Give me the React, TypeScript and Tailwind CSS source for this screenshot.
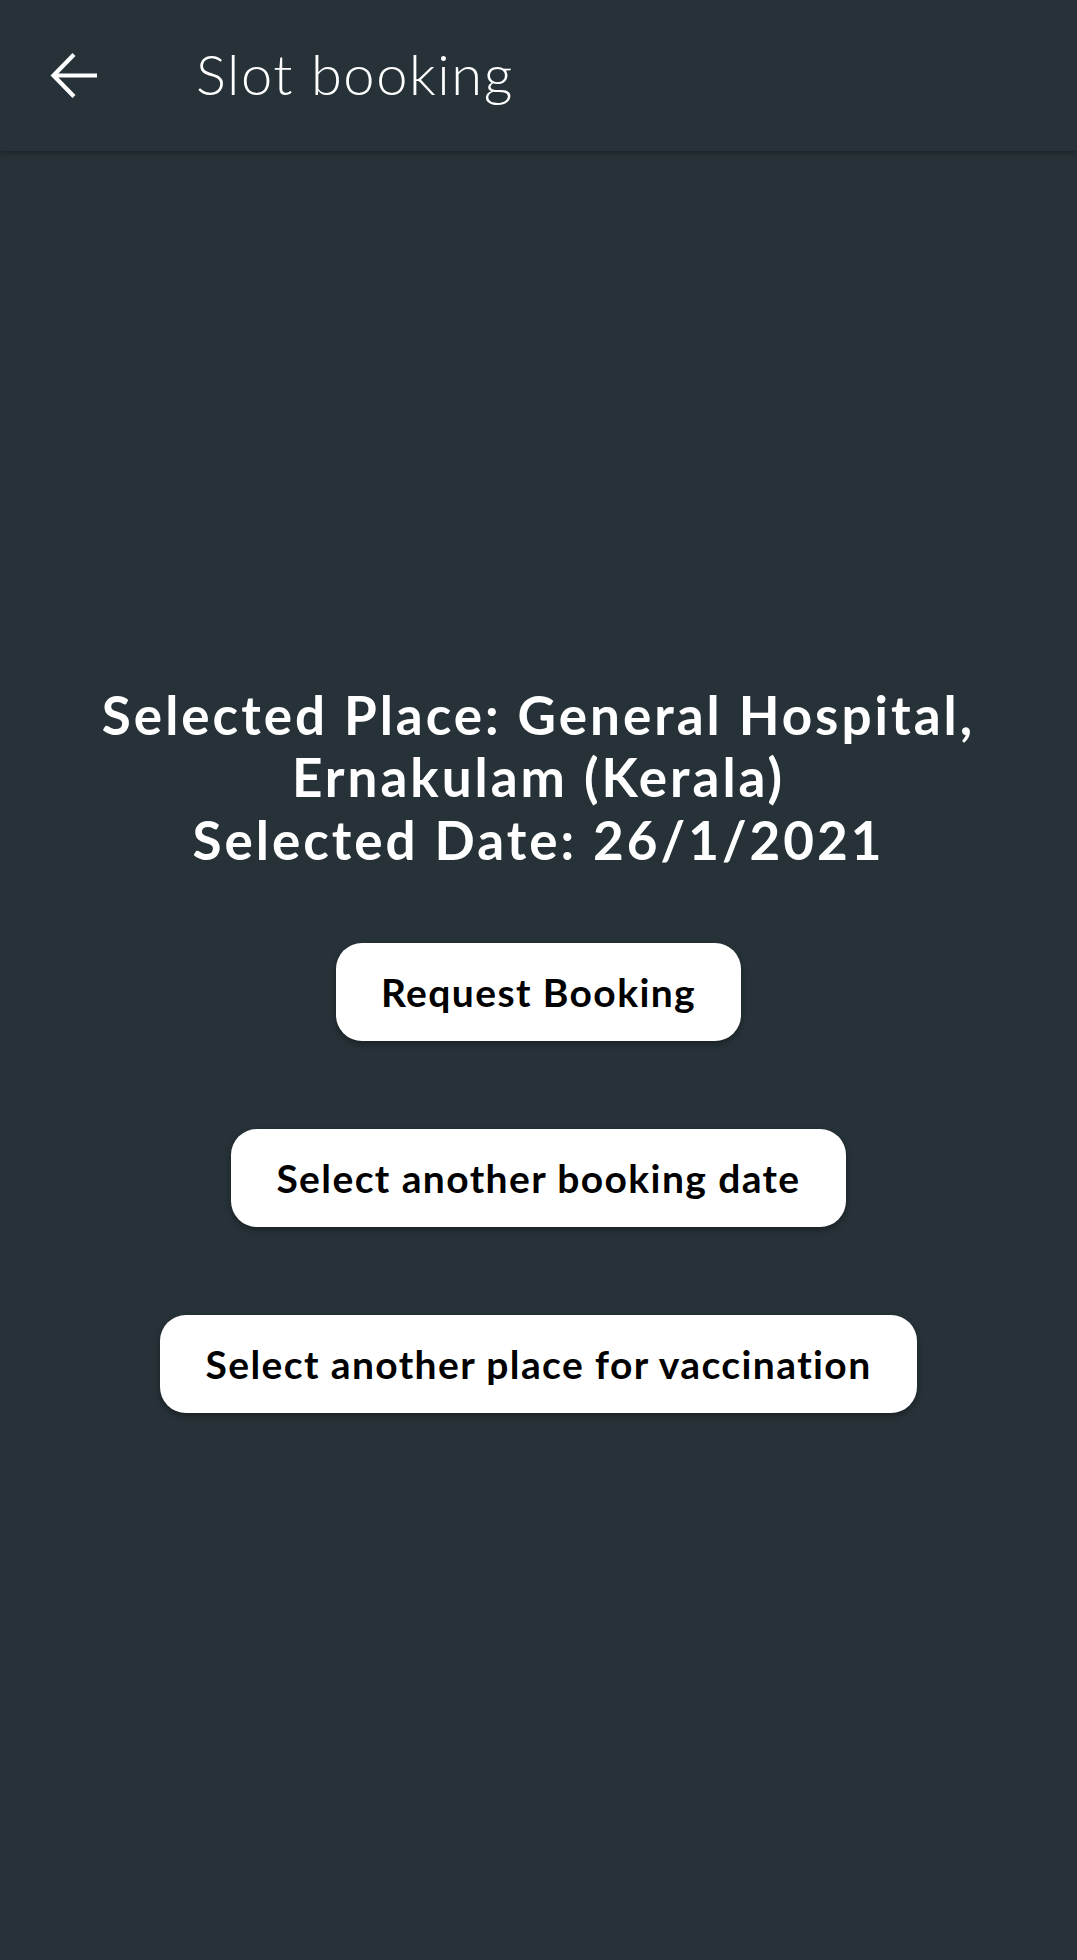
import React from "react";

export default function App() {
  const btn =
    "bg-white text-black rounded-[26px] h-[98px] px-[45px] flex items-center justify-center text-[39px] font-bold tracking-[1.4px] shadow-[0_3px_6px_rgba(0,0,0,0.35)]";
  return (
    <div
      className="w-[1077px] h-[1960px] bg-[#263238] flex flex-col overflow-hidden"
      style={{ fontFamily: "Lato, 'Noto Sans', sans-serif" }}
    >
      <header className="h-[151px] shrink-0 bg-[#263238] flex items-center shadow-[0_2px_5px_rgba(0,0,0,0.3)] relative z-10">
        <div className="w-[196px] flex items-center pl-[50px]">
          <svg width="50" height="50" viewBox="0 0 50 50" fill="none">
            <path
              d="M47 24.5H4M24 3.5L3.5 24.5L24 45.5"
              stroke="white"
              strokeWidth="4.2"
              strokeLinecap="butt"
              strokeLinejoin="miter"
            />
          </svg>
        </div>
        <h1 className="text-white font-light text-[56px] leading-none tracking-[1.6px] -mt-[4px]">Slot booking</h1>
      </header>
      <main className="flex-1 flex flex-col items-center justify-center pb-[14px]">
        <div className="text-white font-bold text-center text-[53px] leading-[62.5px] tracking-[3px] w-[1000px]">
          <p>Selected Place: General Hospital,</p>
          <p>Ernakulam (Kerala)</p>
          <p>Selected Date: 26/1/2021</p>
        </div>
        <div className="flex flex-col items-center gap-[88px] mt-[72px]">
          <button className={btn}>Request Booking</button>
          <button className={btn}>Select another booking date</button>
          <button className={btn}>Select another place for vaccination</button>
        </div>
      </main>
    </div>
  );
}
